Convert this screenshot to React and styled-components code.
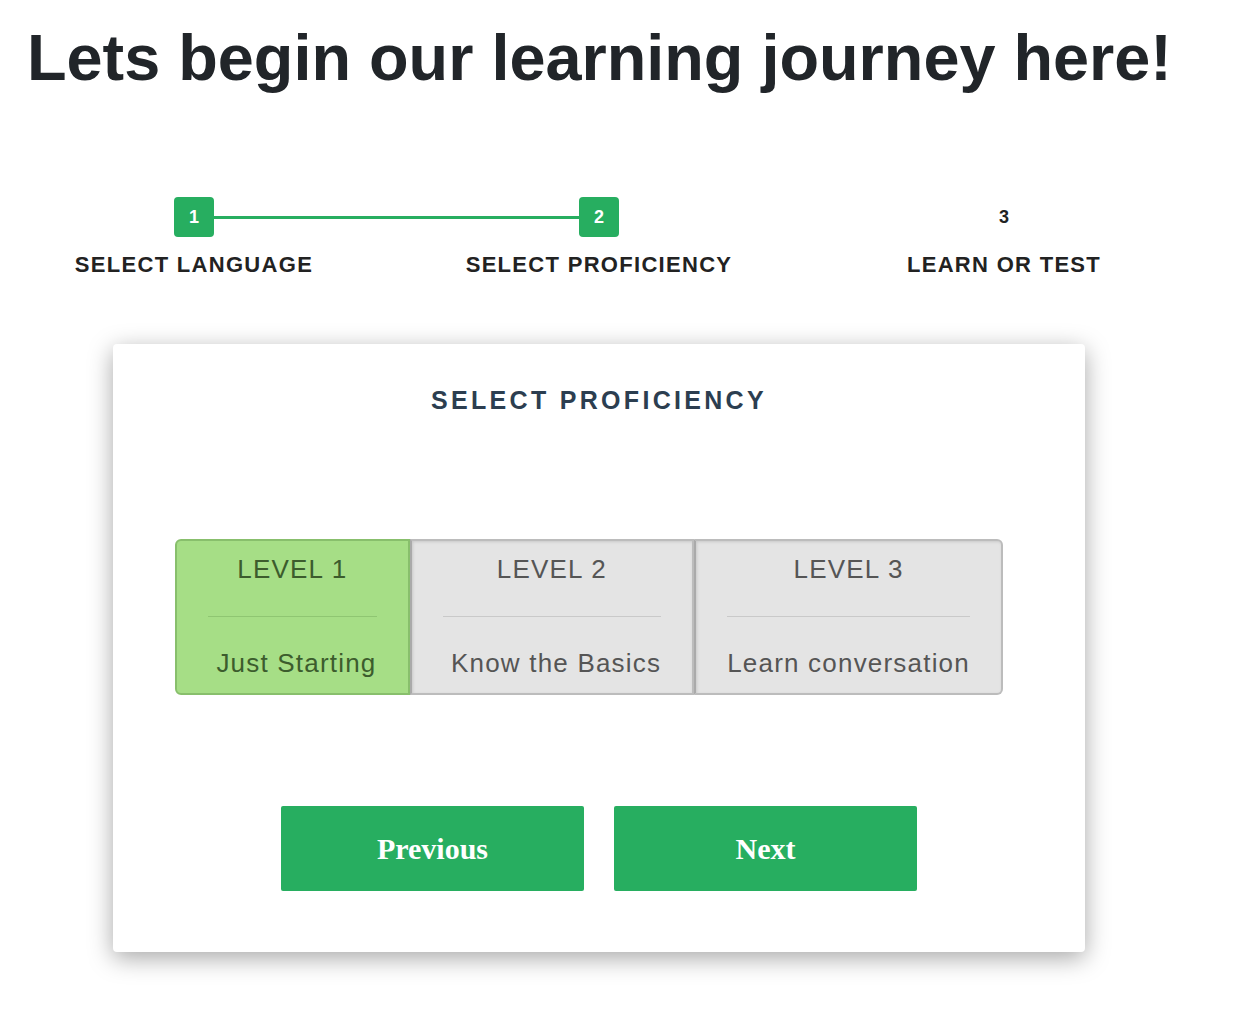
import styled, { createGlobalStyle } from 'styled-components'

const GlobalStyle = createGlobalStyle`
  body {
    margin: 0;
    background: #fff;
    font-family: 'Liberation Sans', Arial, sans-serif;
  }
`

const Page = styled.div`
  width: 1198px;
  padding-bottom: 60px;
`

const Heading = styled.h1`
  margin: 20px 0 0 27px;
  font-size: 64.8px;
  font-weight: 700;
  line-height: 75px;
  color: #212529;
`

const Stepper = styled.div`
  display: grid;
  grid-template-columns: repeat(3, 405px);
  justify-content: center;
  margin-top: 102px;
`

const Step = styled.div`
  display: flex;
  flex-direction: column;
  align-items: center;
`

const MarkerRow = styled.div`
  display: flex;
  align-items: center;
  width: 100%;
  height: 40px;
`

const Line = styled.div`
  flex: 1;
  height: 3px;
  background: ${p => (p.$on ? '#27ae60' : 'transparent')};
`

const Marker = styled.div`
  width: 40px;
  height: 40px;
  border-radius: 4px;
  display: flex;
  align-items: center;
  justify-content: center;
  font-size: 18px;
  font-weight: 700;
  background: ${p => (p.$active ? '#27ae60' : 'transparent')};
  color: ${p => (p.$active ? '#fff' : '#222')};
`

const StepLabel = styled.div`
  margin-top: 15px;
  font-size: 22px;
  font-weight: 700;
  line-height: 25px;
  letter-spacing: 1.3px;
  color: #222;
  white-space: nowrap;
`

const Card = styled.div`
  width: 972px;
  margin: 67px auto 0;
  padding: 43px 0 61px;
  box-sizing: border-box;
  background: #fff;
  border-radius: 4px;
  box-shadow: 0 6px 24px rgba(0, 0, 0, 0.35);
  display: flex;
  flex-direction: column;
  align-items: center;
`

const CardTitle = styled.h2`
  margin: 0;
  font-size: 25px;
  font-weight: 700;
  line-height: 27px;
  letter-spacing: 3.3px;
  color: #2c3e50;
`

const LevelGroup = styled.div`
  display: flex;
  margin-top: 125px;
  align-self: flex-start;
  margin-left: 62px;
`

const Level = styled.label`
  display: flex;
  flex-direction: column;
  align-items: stretch;
  padding: 14px 31px 15px;
  border: 2px solid ${p => (p.$selected ? '#88bf6c' : '#bcbcbc')};
  background: ${p => (p.$selected ? '#a6de86' : '#e4e4e4')};
  color: ${p => (p.$selected ? '#3c5c2d' : '#555')};
  box-shadow: ${p => (p.$selected ? 'none' : 'inset 1px 1px 3px rgba(0,0,0,0.12)')};
  font-size: 26px;
  letter-spacing: 1.2px;
  line-height: 29px;
  white-space: pre;
  text-align: center;
  cursor: pointer;

  & + & {
    border-left-color: #aaa;
  }
  &:first-child {
    border-radius: 6px 0 0 6px;
  }
  &:last-child {
    border-radius: 0 6px 6px 0;
  }
`

const Divider = styled.div`
  height: 1px;
  margin: 32px 0;
  background: ${p => (p.$selected ? '#8fc672' : '#c9c9c9')};
`

const Buttons = styled.div`
  display: flex;
  gap: 30px;
  margin-top: 111px;
`

const NavButton = styled.button`
  width: 303px;
  height: 85px;
  border: none;
  border-radius: 2px;
  background: #27ae60;
  color: #fff;
  font-family: 'Liberation Serif', 'Times New Roman', serif;
  font-size: 30px;
  font-weight: 700;
  cursor: pointer;
`

const steps = [
  { n: 1, label: 'SELECT LANGUAGE', active: true, left: false, right: true },
  { n: 2, label: 'SELECT PROFICIENCY', active: true, left: true, right: false },
  { n: 3, label: 'LEARN OR TEST', active: false, left: false, right: false },
]

const levels = [
  { title: 'LEVEL 1', desc: ' Just Starting', selected: true },
  { title: 'LEVEL 2', desc: ' Know the Basics', selected: false },
  { title: 'LEVEL 3', desc: 'Learn conversation', selected: false },
]

export default function App() {
  return (
    <Page>
      <GlobalStyle />
      <Heading>Lets begin our learning journey here!</Heading>

      <Stepper>
        {steps.map(s => (
          <Step key={s.n}>
            <MarkerRow>
              <Line $on={s.left} />
              <Marker $active={s.active}>{s.n}</Marker>
              <Line $on={s.right} />
            </MarkerRow>
            <StepLabel>{s.label}</StepLabel>
          </Step>
        ))}
      </Stepper>

      <Card>
        <CardTitle>SELECT PROFICIENCY</CardTitle>
        <LevelGroup>
          {levels.map(l => (
            <Level key={l.title} $selected={l.selected}>
              <span>{l.title}</span>
              <Divider $selected={l.selected} />
              <span>{l.desc}</span>
            </Level>
          ))}
        </LevelGroup>
        <Buttons>
          <NavButton>Previous</NavButton>
          <NavButton>Next</NavButton>
        </Buttons>
      </Card>
    </Page>
  )
}
